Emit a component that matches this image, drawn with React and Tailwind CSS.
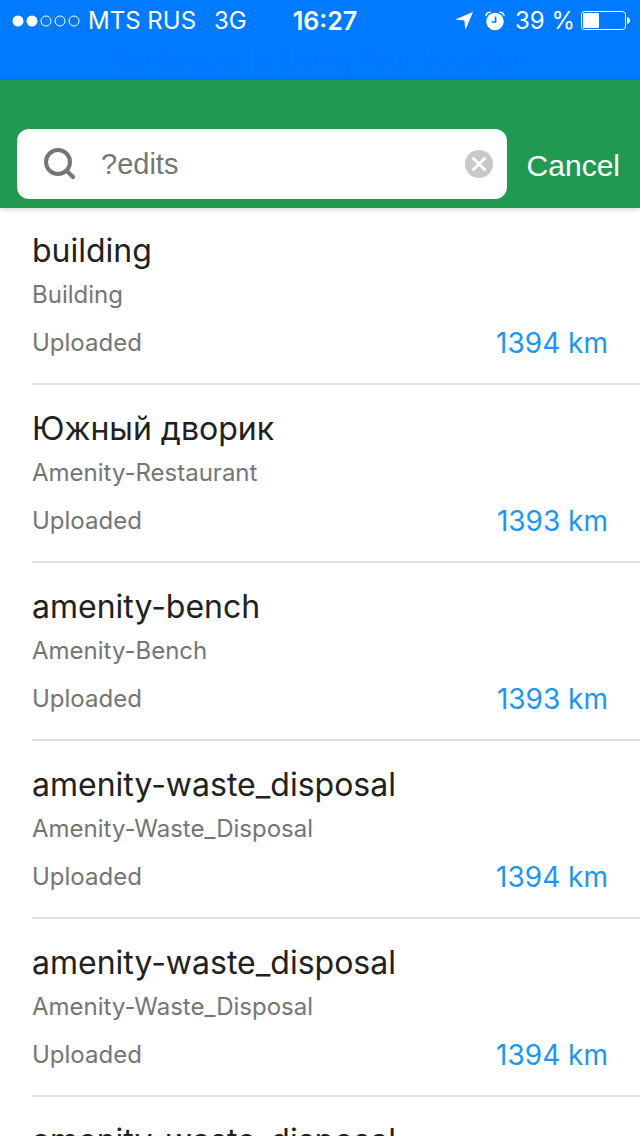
import { useState } from 'react';

const results = [
  { id: 1, name: 'building', type: 'Building', status: 'Uploaded', distance: '1394 km' },
  { id: 2, name: 'Южный дворик', type: 'Amenity-Restaurant', status: 'Uploaded', distance: '1393 km' },
  { id: 3, name: 'amenity-bench', type: 'Amenity-Bench', status: 'Uploaded', distance: '1393 km' },
  { id: 4, name: 'amenity-waste_disposal', type: 'Amenity-Waste_Disposal', status: 'Uploaded', distance: '1394 km' },
  { id: 5, name: 'amenity-waste_disposal', type: 'Amenity-Waste_Disposal', status: 'Uploaded', distance: '1394 km' },
  { id: 6, name: 'amenity-waste_disposal', type: 'Amenity-Waste_Disposal', status: 'Uploaded', distance: '1394 km' },
];

function SignalDots() {
  return (
    <svg className="w-17 h-3 shrink-0" viewBox="0 0 68 12" fill="none" stroke="#fff">
      <circle cx="6" cy="6" r="5.5" fill="#fff" stroke="none" />
      <circle cx="20" cy="6" r="5.5" fill="#fff" stroke="none" />
      <circle cx="34" cy="6" r="5" />
      <circle cx="48" cy="6" r="5" />
      <circle cx="62" cy="6" r="5" />
    </svg>
  );
}

function LocationArrow() {
  return (
    <svg className="w-[18px] h-[18px] shrink-0" viewBox="0 0 18 18" fill="#fff">
      <path d="M18 0 L10.4 18 L9.4 8.6 L0 7.6 Z" />
    </svg>
  );
}

function AlarmIcon() {
  return (
    <svg className="w-5 h-5 shrink-0" viewBox="0 0 20 20" fill="none">
      <circle cx="10" cy="10.5" r="8.7" fill="#fff" />
      <path d="M0.9 4.6 Q1.6 1.4 5.2 1.2 M14.8 1.2 Q18.4 1.4 19.1 4.6" stroke="#fff" strokeWidth="1.4" strokeLinecap="round" />
      <path d="M10.6 5.5 V11 H6.6" stroke="#007aff" strokeWidth="1.6" />
    </svg>
  );
}

function BatteryIcon() {
  return (
    <svg className="w-[49px] h-5 shrink-0" viewBox="0 0 49 20" fill="none">
      <rect x="0.5" y="0.5" width="44" height="18" rx="3" stroke="#fff" />
      <rect x="2" y="2" width="16" height="15" rx="1" fill="#fff" />
      <path d="M46 6 C50 6.9 50 12.1 46 13 Z" fill="#fff" />
    </svg>
  );
}

function StatusBar() {
  return (
    <div className="bg-[#007aff] text-white">
      <div className="grid grid-cols-[1fr_auto_1fr] items-center h-10 pl-3 pr-2.5 pt-px text-2xl leading-10 whitespace-nowrap">
        <div className="flex items-center">
          <SignalDots />
          <span className="ml-2">MTS RUS</span>
          <span className="ml-[18px]">3G</span>
        </div>
        <span className="pl-2 text-[25px] font-semibold">16:27</span>
        <div className="flex items-center justify-end">
          <LocationArrow />
          <span className="ml-3 flex">
            <AlarmIcon />
          </span>
          <span className="ml-2.5">39 %</span>
          <span className="ml-1.5 flex">
            <BatteryIcon />
          </span>
        </div>
      </div>
      <div className="h-10 text-center text-[26px] leading-10 text-[#0277fa]">
        Runkeeper is Using Your Location
      </div>
    </div>
  );
}

function SearchHeader() {
  const [query, setQuery] = useState('?edits');

  return (
    <header className="relative z-10 flex items-center gap-5 bg-[#229951] pt-12 pb-2 pl-4 pr-5 shadow-[0_1px_6px_rgba(0,0,0,0.2)] font-['Liberation_Sans',Arial,sans-serif]">
      <div className="flex flex-1 min-w-0 items-center my-px ml-px h-[70px] rounded-xl bg-white pl-[26px] pr-3.5">
        <svg className="w-8 h-8 shrink-0" viewBox="0 0 32 32" fill="none" stroke="#757575" strokeWidth="4" strokeLinecap="round">
          <circle cx="15" cy="14" r="12" />
          <path d="M23.5 22.5 L30 29" />
        </svg>
        <input
          type="text"
          aria-label="Search"
          value={query}
          onChange={(e) => setQuery(e.target.value)}
          className="flex-1 min-w-0 ml-[26px] text-[29px] leading-9 text-[#757575] bg-transparent outline-none"
        />
        <button type="button" aria-label="Clear search" onClick={() => setQuery('')} className="shrink-0">
          <svg className="w-7 h-7" viewBox="0 0 28 28" fill="none">
            <circle cx="14" cy="14" r="14" fill="#c9c9c9" />
            <path d="M8.4 8.4 L19.6 19.6 M19.6 8.4 L8.4 19.6" stroke="#fff" strokeWidth="2.8" strokeLinecap="round" />
          </svg>
        </button>
      </div>
      <button type="button" className="pt-1 text-[30px] leading-9 text-white">
        Cancel
      </button>
    </header>
  );
}

function ResultRow({ result }) {
  return (
    <li className="ml-8 pt-5 pb-5 border-b-2 border-[#e0e0e0]">
      <h2 className="text-[32px] leading-12 text-[#212121]">{result.name}</h2>
      <p className="text-2xl leading-10 text-[#757575]">{result.type}</p>
      <div className="flex items-center justify-between pt-2 pr-8">
        <span className="text-2xl leading-10 text-[#757575]">{result.status}</span>
        <span className="text-[28px] leading-10 text-[#1e96f0]">{result.distance}</span>
      </div>
    </li>
  );
}

export default function App() {
  return (
    <div className="flex flex-col h-screen overflow-hidden bg-white font-[Inter,Roboto,sans-serif]">
      <StatusBar />
      <SearchHeader />
      <main className="flex-1 min-h-0 -mt-px overflow-hidden">
        <ul>
          {results.map((result) => (
            <ResultRow key={result.id} result={result} />
          ))}
        </ul>
      </main>
    </div>
  );
}
